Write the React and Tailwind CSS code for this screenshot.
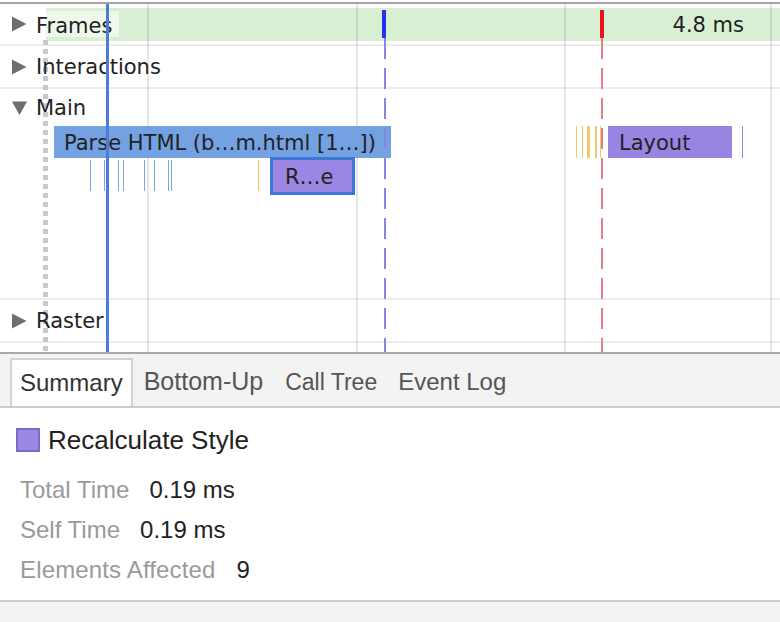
import React from "react";

const blueTicks = [90, 104, 118, 123, 144, 154, 168, 171];
const orangeTicks = [
  { x: 576, w: 1 },
  { x: 582, w: 1 },
  { x: 587, w: 3 },
  { x: 595, w: 2 },
  { x: 600, w: 1 },
];
const gridX = [147, 356, 564, 770];

function RightTri() {
  return (
    <svg width="15" height="16" viewBox="0 0 15 16" className="shrink-0">
      <polygon points="0,0.5 14.5,8 0,15.5" fill="#6e6e6e" />
    </svg>
  );
}
function DownTri() {
  return (
    <svg width="15" height="16" viewBox="0 0 15 16" className="shrink-0">
      <polygon points="0,1.5 15,1.5 7.5,15" fill="#6e6e6e" />
    </svg>
  );
}

export default function App() {
  return (
    <div className="w-[780px] h-[622px] bg-white overflow-hidden flex flex-col">
      {/* Timeline area */}
      <div className="relative h-[352px] shrink-0 font-['DejaVu_Sans',sans-serif] text-[21px] text-[#222]">
        {/* grid lines */}
        {gridX.map((x) => (
          <div
            key={x}
            className="absolute top-[4px] bottom-0 w-[2px] bg-black/10 z-[2]"
            style={{ left: x }}
          />
        ))}
        {/* gray dotted column */}
        <div className="absolute left-[43px] top-[40px] bottom-0 w-[5px] bg-[repeating-linear-gradient(to_bottom,#c9c9c9_0px,#c9c9c9_5px,transparent_5px,transparent_9px)] z-[1]" />

        <div className="h-[2px]" />
        <div className="h-[2px] bg-[#a3a3a3]" />

        {/* Frames row */}
        <div className="relative h-[40px] flex items-center pl-[12px] gap-[9px]">
          <div className="absolute left-[46px] right-0 top-[4px] h-[33px] bg-[#d9efd3] flex items-center justify-end pr-[36px] pt-[2px]">
            4.8 ms
          </div>
          <RightTri />
          <span className="relative z-[3] h-[26px] leading-[26px] bg-white/55 pr-[7px] pt-[2px]">Frames</span>
        </div>
        <div className="h-[2px] bg-[#ececec]" />

        {/* Interactions row */}
        <div className="relative h-[41px] flex items-center pl-[12px] gap-[9px]">
          <RightTri />
          <span className="relative z-[3] pt-[2px]">Interactions</span>
        </div>
        <div className="h-[2px] bg-[#ececec]" />

        {/* Main row */}
        <div className="relative h-[209px]">
          <div className="h-[38px] flex items-center pl-[12px] gap-[9px]">
            <DownTri />
            <span className="relative z-[3] pt-[2px]">Main</span>
          </div>
        </div>
        <div className="h-[2px] bg-[#ececec]" />

        {/* Raster row */}
        <div className="relative h-[41px] flex items-center pl-[12px] gap-[9px]">
          <RightTri />
          <span className="relative z-[3] pt-[2px]">Raster</span>
        </div>
        <div className="h-[2px] bg-[#ececec]" />

        {/* flame chart entries */}
        <div className="absolute left-[54px] top-[126px] w-[337px] h-[32px] bg-[#73a1e2] pl-[10px] pt-[1px] leading-[32px] whitespace-nowrap z-[3]">
          Parse HTML (b…m.html [1…])
        </div>
        {blueTicks.map((x) => (
          <div
            key={x}
            className="absolute top-[160px] h-[31px] w-[1px] bg-[#7ba6e4] z-[3]"
            style={{ left: x }}
          />
        ))}
        <div className="absolute left-[258px] top-[160px] h-[31px] w-[1px] bg-[#f0c465] z-[3]" />
        <div className="absolute left-[270px] top-[157px] w-[85px] h-[38px] border-[3px] border-[#3e78d6] bg-[#9b86e3] pl-[12px] pt-[1px] leading-[32px] z-[3]">
          R…e
        </div>
        {orangeTicks.map((t) => (
          <div
            key={t.x}
            className="absolute top-[126px] h-[32px] bg-[#f0c86a] z-[3]"
            style={{ left: t.x, width: t.w }}
          />
        ))}
        <div className="absolute left-[608px] top-[126px] w-[124px] h-[32px] bg-[#9a84e1] pl-[11px] pt-[1px] leading-[32px] z-[3]">
          Layout
        </div>
        <div className="absolute left-[742px] top-[126px] w-[1px] h-[32px] bg-[#9a84e1] z-[3]" />

        {/* frame markers */}
        <div className="absolute left-[382px] top-[10px] w-[4px] h-[28px] bg-[#2233ee] z-[4]" />
        <div className="absolute left-[384px] top-[38px] bottom-0 w-[2px] bg-[repeating-linear-gradient(to_bottom,#8585e6_0px,#8585e6_21px,transparent_21px,transparent_30px)] z-[4]" />
        <div className="absolute left-[600px] top-[10px] w-[4px] h-[28px] bg-[#e8121c] z-[4]" />
        <div className="absolute left-[601px] top-[38px] bottom-0 w-[2px] bg-[repeating-linear-gradient(to_bottom,#e3808a_0px,#e3808a_21px,transparent_21px,transparent_30px)] z-[4]" />

        {/* current time cursor */}
        <div className="absolute left-[106px] top-[4px] bottom-0 w-[3px] bg-[#4a7cd8] z-[5]" />
      </div>

      {/* Details panel */}
      <div className="flex-1 flex flex-col font-['Liberation_Sans',Arial,sans-serif]">
        <div className="h-[2px] bg-[#a9a9a9]" />
        <div className="h-[52px] bg-[#f3f3f3] flex items-end pl-[10px] text-[24px] text-[#555]">
          <div className="h-[48px] border-2 border-b-0 border-[#d2d2d2] bg-white px-[8px] flex items-center text-[#333]">
            Summary
          </div>
          <div className="h-[48px] px-[11px] flex items-center text-[25px]">Bottom-Up</div>
          <div className="h-[48px] pl-[11px] pr-[10px] flex items-center text-[23px]">Call Tree</div>
          <div className="h-[48px] px-[11px] flex items-center">Event Log</div>
        </div>
        <div className="h-[2px] bg-[#cccccc]" />
        <div className="h-[192px] bg-white">
          <div className="mt-[20px] ml-[16px] h-[24px] flex items-center gap-[8px]">
            <div className="w-[24px] h-[24px] border-2 border-[#7d67c9] bg-[#9b87e4]" />
            <span className="text-[26px] text-[#222]">Recalculate Style</span>
          </div>
          <div className="mt-[18px] ml-[20px] text-[24px]">
            <div className="h-[40px] flex items-center gap-[20px]">
              <span className="text-[#9a9a9a]">Total Time</span>
              <span className="text-[#222]">0.19 ms</span>
            </div>
            <div className="h-[40px] flex items-center gap-[20px]">
              <span className="text-[#9a9a9a]">Self Time</span>
              <span className="text-[#222]">0.19 ms</span>
            </div>
            <div className="h-[40px] flex items-center gap-[21px]">
              <span className="text-[#9a9a9a] tracking-[0.15px]">Elements Affected</span>
              <span className="text-[#222]">9</span>
            </div>
          </div>
        </div>
        <div className="h-[2px] bg-[#cccccc]" />
        <div className="flex-1 bg-[#f3f3f3]" />
      </div>
    </div>
  );
}
